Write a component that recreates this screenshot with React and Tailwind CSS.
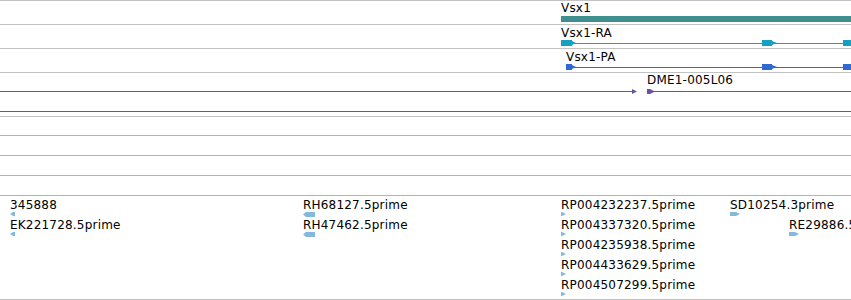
import React from "react";

const font = { fontFamily: '"DejaVu Sans", sans-serif', letterSpacing: "0.2px" };

function ExonRight({ left, width, color, box }) {
  const w = width;
  const b = box;
  return (
    <svg className="absolute top-0" style={{ left }} width={w} height={6}>
      <polygon points={`0,0 ${b},0 ${b},1 ${w},3 ${b},5 ${b},6 0,6`} fill={color} />
    </svg>
  );
}

function GeneGlyph({ color, exons }) {
  return (
    <div className="absolute left-0 right-0 top-[15px] h-[6px]">
      <div className="absolute right-0 top-[3px] h-px" style={{ left: exons[0].left, background: color }} />
      {exons.map((e, i) =>
        e.full ? (
          <div key={i} className="absolute top-0 right-0 h-[6px]" style={{ left: e.left, background: color }} />
        ) : (
          <ExonRight key={i} left={e.left} width={e.width} box={e.box} color={color} />
        )
      )}
    </div>
  );
}

function Label({ x, y, children }) {
  return (
    <div className="absolute whitespace-nowrap text-[12px] leading-[12px] text-black" style={{ left: x, top: y }}>
      {children}
    </div>
  );
}

function EstArrow({ dir, w, h }) {
  const pts =
    dir === "r"
      ? `0,0 ${w - 4},0 ${w},${h / 2} ${w - 4},${h} 0,${h}`
      : `0,${h / 2} 3,0 ${w},0 ${w},${h} 3,${h}`;
  return (
    <svg className="block" width={w} height={h}>
      <polygon points={pts} fill="#84b9de" />
    </svg>
  );
}

function Est({ text, dir, w, h }) {
  return (
    <div className="flex flex-col h-[20px]">
      <div className="whitespace-nowrap text-[12px] leading-[12px] h-[13px] text-black">{text}</div>
      <EstArrow dir={dir} w={w} h={h} />
    </div>
  );
}

const estCols = [
  { x: 10, top: 3, items: [["345888", "l", 5, 4], ["EK221728.5prime", "l", 5, 4]] },
  { x: 303, top: 3, items: [["RH68127.5prime", "l", 12, 5], ["RH47462.5prime", "l", 12, 5]] },
  {
    x: 561,
    top: 3,
    items: [
      ["RP004232237.5prime", "r", 5, 4],
      ["RP004337320.5prime", "r", 5, 4],
      ["RP004235938.5prime", "r", 5, 4],
      ["RP004433629.5prime", "r", 5, 4],
      ["RP004507299.5prime", "r", 5, 4],
    ],
  },
  { x: 730, top: 3, items: [["SD10254.3prime", "r", 10, 4]] },
  { x: 789, top: 23, items: [["RE29886.5prime", "r", 10, 4]] },
];

export default function App() {
  return (
    <div className="w-[851px] h-[300px] overflow-hidden bg-white flex flex-col" style={font}>
      <div className="relative h-[24px] shrink-0 border-t border-[#c2c2c2]">
        <Label x={561} y={1}>Vsx1</Label>
        <div className="absolute left-[561px] right-0 top-[15px] h-[6px] bg-[#3f8f8f]" />
      </div>
      <div className="relative h-[24px] shrink-0 border-t border-[#c2c2c2]">
        <Label x={561} y={2}>Vsx1-RA</Label>
        <GeneGlyph
          color="#16a0bf"
          exons={[
            { left: 561, width: 15, box: 11 },
            { left: 762, width: 15, box: 10 },
            { left: 843, full: true },
          ]}
        />
      </div>
      <div className="relative h-[24px] shrink-0 border-t border-[#c2c2c2]">
        <Label x={566} y={2}>Vsx1-PA</Label>
        <GeneGlyph
          color="#3069d0"
          exons={[
            { left: 566, width: 10, box: 6 },
            { left: 762, width: 15, box: 10 },
            { left: 843, full: true },
          ]}
        />
      </div>
      <div className="relative h-[44px] shrink-0 border-t border-[#c2c2c2]">
        <Label x={647} y={1}>DME1-005L06</Label>
        <div className="absolute left-0 top-[15px] w-[637px] h-[6px]">
          <div className="absolute left-0 right-[4px] top-[3px] h-px bg-[#6a52a4]" />
          <svg className="absolute right-0 top-[1px]" width={5} height={5}>
            <polygon points="0,0 5,2.5 0,5" fill="#6a52a4" />
          </svg>
        </div>
        <div className="absolute left-[647px] right-0 top-[15px] h-[6px]">
          <div className="absolute left-[6px] right-0 top-[3px] h-px bg-[#6a52a4]" />
          <svg className="absolute left-0 top-[1px]" width={9} height={5}>
            <polygon points="0,0 3,0 8,2.5 3,5 0,5" fill="#6a52a4" />
          </svg>
        </div>
        <div className="absolute left-0 right-0 top-[38px] h-px bg-[#6a52a4]" />
      </div>
      <div className="h-[19px] shrink-0 border-t border-[#c2c2c2]" />
      <div className="h-[20px] shrink-0 border-t border-[#8fbcdc]" />
      <div className="h-[20px] shrink-0 border-t border-[#8fbcdc]" />
      <div className="h-[20px] shrink-0 border-t border-[#8fbcdc]" />
      <div className="relative h-[104px] shrink-0 border-t border-[#8fbcdc]">
        {estCols.map((c, i) => (
          <div key={i} className="absolute flex flex-col" style={{ left: c.x, top: c.top }}>
            {c.items.map(([t, d, w, h], j) => (
              <Est key={j} text={t} dir={d} w={w} h={h} />
            ))}
          </div>
        ))}
      </div>
      <div className="h-px shrink-0 bg-[#c2c2c2]" />
    </div>
  );
}
